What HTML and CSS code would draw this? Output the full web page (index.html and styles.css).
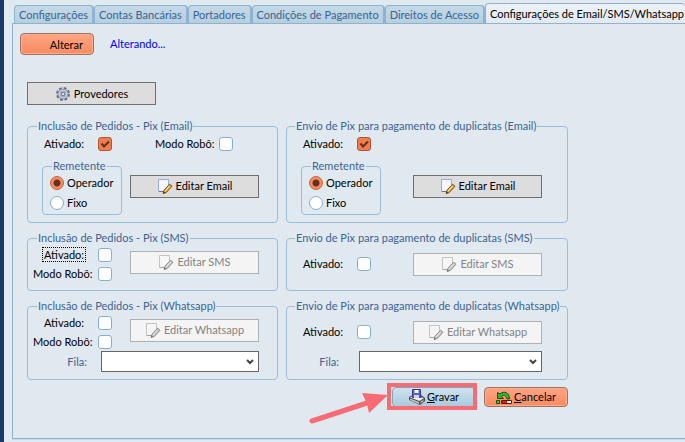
FILE: index.html
```html
<!DOCTYPE html>
<html lang="pt-BR">
<head>
    <meta charset="UTF-8">
    <meta name="viewport" content="width=device-width, initial-scale=1.0">
    <title>Configurações de Email/SMS/Whatsapp</title>
    <link rel="stylesheet" href="styles.css">
</head>
<body>
    <!-- Ícones reutilizados -->
    <svg class="sprite" aria-hidden="true">
        <symbol id="icone-editar" viewBox="0 0 16 16">
            <path class="folha" d="M1.5 1.5h10v9l-4 3h-6z"/>
            <path class="sombra" d="M2 13.5h6l4-4"/>
            <path class="lapis" d="M12.6 6.2l2.4 2-5.6 6.2-3.2 1.2.8-3.4z"/>
            <path class="brilho" d="M12.4 8.2l-4.4 5"/>
            <path class="ponta" d="M6.5 13.6l1.6 1.2-2.2.9z"/>
        </symbol>
    </svg>

    <nav class="abas">
        <a href="#" class="aba">Configurações</a>
        <a href="#" class="aba">Contas Bancárias</a>
        <a href="#" class="aba">Portadores</a>
        <a href="#" class="aba">Condições de Pagamento</a>
        <a href="#" class="aba">Direitos de Acesso</a>
        <a href="#" class="aba ativa">Configurações de Email/SMS/Whatsapp</a>
    </nav>

    <main class="painel">
        <div class="topo">
            <button type="button" class="btn btn-laranja btn-alterar">Alterar</button>
            <span class="status">Alterando...</span>
        </div>

        <form class="conteudo" action="#" method="post">
            <button type="button" class="btn-plano">
                <svg class="icone" viewBox="0 0 16 16" aria-hidden="true">
                    <circle cx="8" cy="8" r="5.8" fill="none" stroke="#66738d" stroke-width="2.4" stroke-dasharray="2.7 1.85"/>
                    <circle cx="8" cy="8" r="4" fill="#dfe5ef" stroke="#77849f" stroke-width="2.4"/>
                    <circle cx="8" cy="8" r="3.9" fill="none" stroke="#cdd6e4" stroke-width="1.4"/>
                    <circle cx="8" cy="8" r="1.9" fill="#dedede" stroke="#5d6b85" stroke-width="1"/>
                </svg>
                Provedores
            </button>

            <div class="grupos">
                <fieldset class="grupo">
                    <legend>Inclusão de Pedidos - Pix (Email)</legend>
                    <div class="linha linha-email">
                        <label class="campo" for="pix_email"><span class="texto">Ativado:</span></label>
                        <input type="checkbox" id="pix_email" checked>
                        <label class="robo" for="pix_email_robo">Modo Robô:</label>
                        <input type="checkbox" id="pix_email_robo">
                    </div>
                    <div class="linha">
                        <fieldset class="remetente">
                            <legend>Remetente</legend>
                            <label><input type="radio" name="remetente_pix" checked>Operador</label>
                            <label><input type="radio" name="remetente_pix">Fixo</label>
                        </fieldset>
                        <button type="button" class="btn-plano">
                            <svg class="icone"><use href="#icone-editar"/></svg>Editar Email
                        </button>
                    </div>
                </fieldset>

                <fieldset class="grupo grupo-envio">
                    <legend>Envio de Pix para pagamento de duplicatas (Email)</legend>
                    <div class="linha linha-email">
                        <label class="campo" for="dup_email"><span class="texto">Ativado:</span></label>
                        <input type="checkbox" id="dup_email" checked>
                    </div>
                    <div class="linha">
                        <fieldset class="remetente">
                            <legend>Remetente</legend>
                            <label><input type="radio" name="remetente_dup" checked>Operador</label>
                            <label><input type="radio" name="remetente_dup">Fixo</label>
                        </fieldset>
                        <button type="button" class="btn-plano">
                            <svg class="icone"><use href="#icone-editar"/></svg>Editar Email
                        </button>
                    </div>
                </fieldset>

                <fieldset class="grupo">
                    <legend>Inclusão de Pedidos - Pix (SMS)</legend>
                    <div class="linha">
                        <div class="opcoes">
                            <div class="linha">
                                <label class="campo" for="pix_sms"><span class="texto foco">Ativado:</span></label>
                                <input type="checkbox" id="pix_sms">
                            </div>
                            <div class="linha">
                                <label class="campo longo" for="pix_sms_robo">Modo Robô:</label>
                                <input type="checkbox" id="pix_sms_robo">
                            </div>
                        </div>
                        <button type="button" class="btn-plano" disabled>
                            <svg class="icone"><use href="#icone-editar"/></svg>Editar SMS
                        </button>
                    </div>
                </fieldset>

                <fieldset class="grupo grupo-envio">
                    <legend>Envio de Pix para pagamento de duplicatas (SMS)</legend>
                    <div class="linha">
                        <div class="opcoes">
                            <div class="linha">
                                <label class="campo" for="dup_sms"><span class="texto">Ativado:</span></label>
                                <input type="checkbox" id="dup_sms">
                            </div>
                        </div>
                        <button type="button" class="btn-plano" disabled>
                            <svg class="icone"><use href="#icone-editar"/></svg>Editar SMS
                        </button>
                    </div>
                </fieldset>

                <fieldset class="grupo">
                    <legend>Inclusão de Pedidos - Pix (Whatsapp)</legend>
                    <div class="linha">
                        <div class="opcoes">
                            <div class="linha">
                                <label class="campo" for="pix_whats"><span class="texto">Ativado:</span></label>
                                <input type="checkbox" id="pix_whats">
                            </div>
                            <div class="linha">
                                <label class="campo longo" for="pix_whats_robo">Modo Robô:</label>
                                <input type="checkbox" id="pix_whats_robo">
                            </div>
                        </div>
                        <button type="button" class="btn-plano" disabled>
                            <svg class="icone"><use href="#icone-editar"/></svg>Editar Whatsapp
                        </button>
                    </div>
                    <div class="linha fila">
                        <label for="pix_fila">Fila:</label>
                        <select id="pix_fila"><option value=""></option></select>
                    </div>
                </fieldset>

                <fieldset class="grupo grupo-envio">
                    <legend>Envio de Pix para pagamento de duplicatas (Whatsapp)</legend>
                    <div class="linha">
                        <div class="opcoes">
                            <div class="linha">
                                <label class="campo" for="dup_whats"><span class="texto">Ativado:</span></label>
                                <input type="checkbox" id="dup_whats">
                            </div>
                        </div>
                        <button type="button" class="btn-plano" disabled>
                            <svg class="icone"><use href="#icone-editar"/></svg>Editar Whatsapp
                        </button>
                    </div>
                    <div class="linha fila">
                        <label for="dup_fila">Fila:</label>
                        <select id="dup_fila"><option value=""></option></select>
                    </div>
                </fieldset>
            </div>

            <div class="acoes">
                <div class="destaque">
                    <button type="submit" class="btn btn-azul">
                        <svg class="icone" viewBox="0 0 16 16" aria-hidden="true">
                            <path d="M0 8l4-2h8l4 3v3l-5 4-11-5z" fill="#4a4a55"/>
                            <path d="M1 8.5L4.500 7 15 9l-4.500 3z" fill="#f1f1f5"/>
                            <path d="M1 9.500l9 3.500v2l-9-4z" fill="#c3c4cf"/>
                            <path d="M11 13l4-3v2l-4 3z" fill="#85869a"/>
                            <path d="M3.500.500h8v8h-8z" fill="#5a60c8" stroke="#34398a"/>
                            <path d="M5.500 1h4v3h-4z" fill="#fff"/>
                            <path d="M5 6h5v3H5z" fill="#c9d6fa"/>
                            <path d="M12 12h2v1h-2z" fill="#e9d24a"/>
                        </svg>
                        <span><u>G</u>ravar</span>
                    </button>
                    <svg class="seta" viewBox="0 0 82 34" aria-hidden="true">
                        <path d="M4 29L62 10" stroke="#f76c72" stroke-width="5" stroke-linecap="round"/>
                        <path d="M54 1L80 3 61 21 59 12z" fill="#f76c72"/>
                    </svg>
                </div>
                <button type="button" class="btn btn-laranja">
                    <svg class="icone" viewBox="0 0 16 16" aria-hidden="true">
                        <path d="M1.500 3.500v6h6L5.500 7.500c2-2 4-1.500 5.500 2.500h2.500c0-6-5-9-9.500-5z" fill="#35b52c" stroke="#14500f"/>
                        <path d="M.500 11.500h3v3h-3z" fill="#41c936" stroke="#14500f"/>
                        <path d="M5.500 11.500h10v3h-10z" fill="#fff" stroke="#6d1208"/>
                        <path d="M6 12h5v2H6z" fill="#d81c12"/>
                    </svg>
                    <span><u>C</u>ancelar</span>
                </button>
            </div>
        </form>
    </main>
</body>
</html>
```

FILE: styles.css
```css
* {
    box-sizing: border-box;
}
body {
    display: flex;
    flex-direction: column;
    min-height: 100vh;
    margin: 0;
    padding: 3px 0 3px 8px;
    border-left: 4px solid #1b3a69;
    background-color: #e1e9f0;
    color: #000000;
    font-family: Tahoma, Lato, "DejaVu Sans", sans-serif;
    font-size: 11px;
    line-height: 14px;
}
button,
input,
select {
    margin: 0;
    font: inherit;
    color: inherit;
}
.sprite {
    position: absolute;
    width: 0;
    height: 0;
}

/* Abas */
.abas {
    display: flex;
    align-items: flex-end;
    padding-left: 2px;
}
.aba {
    height: 18px;
    padding: 2px 4px 0;
    border: 1px solid #8db3cf;
    border-right-width: 2px;
    border-bottom: 0;
    border-radius: 4px 4px 0 0;
    background: linear-gradient(#c4d9e7, #b6cfdf);
    color: #3a6492;
    text-decoration: none;
    white-space: nowrap;
}
.aba.ativa {
    flex: 1;
    height: 21px;
    margin-bottom: -1px;
    padding: 3px 0 0 4px;
    border-right: 0;
    background: linear-gradient(#edf2f8, #e1e9f0);
    color: #000000;
}

/* Painel */
.painel {
    flex: 1;
    padding: 9px 7px;
    border: 1px solid #8db3cf;
    border-right: 0;
    box-shadow: 0 1px 0 #c9dae7;
}
.topo {
    display: flex;
    gap: 16px;
}
.status {
    padding-top: 4px;
    color: #0000ff;
}
.conteudo {
    max-width: 548px;
    padding: 27px 0 0 7px;
}
.btn {
    display: flex;
    align-items: center;
    justify-content: center;
    gap: 2px;
    width: 84px;
    height: 20px;
    padding: 0;
    border: 1px solid #9b7468;
    border-radius: 4px;
}
.btn-laranja {
    background: linear-gradient(#ffa583, #f88a60);
    box-shadow: inset 0 0 0 1px #ffab8c;
}
.btn-azul {
    border-color: #7fa6bd;
    background: linear-gradient(#cfe2ee, #a9cbdd);
}
.btn-alterar {
    justify-content: flex-end;
    width: 74px;
    height: 22px;
    padding: 1px 10px 0;
}
.btn-plano {
    display: flex;
    align-items: center;
    justify-content: center;
    gap: 3px;
    width: 129px;
    height: 23px;
    padding: 0;
    border: 1px solid #707070;
    background-color: #dddddd;
    white-space: nowrap;
}
.btn-plano:disabled {
    border-color: #adb2b5;
    background-color: #f4f4f4;
    color: #838383;
}
.icone {
    flex: none;
    width: 16px;
    height: 16px;
}

/* Desenho da folha com lapis */
.folha {
    fill: #f4f7ff;
    stroke: #9aa9d6;
}
.sombra {
    fill: none;
    stroke: #5f74b8;
}
.lapis {
    fill: #e5a93c;
    stroke: #7a5216;
}
.brilho {
    stroke: #ffe9a8;
}
.ponta {
    fill: #3a2a14;
}
.btn-plano:disabled .icone {
    filter: grayscale(1) opacity(0.65);
}

/* Grupos */
.grupos {
    display: grid;
    grid-template-columns: 251fr 282fr;
    gap: 8px;
    margin-top: 14px;
}
fieldset {
    min-width: 0;
    margin: 0;
    padding: 0;
    border: 1px solid #9dbdd7;
    border-radius: 4px;
}
legend {
    height: 14px;
    margin-left: 9px;
    padding: 0 1px;
    color: #3a6492;
    white-space: nowrap;
}
.grupo {
    padding-bottom: 7px;
}
.grupo-envio > legend {
    margin-left: 8px;
}
.linha {
    display: flex;
    align-items: center;
}
.linha-email {
    padding: 4px 0 8px;
}
.campo {
    width: 70px;
    padding-left: 15px;
}
.campo.longo {
    padding-left: 5px;
}
.texto {
    padding: 0 1px;
}
.foco {
    outline: 1px dotted #000000;
}
.robo {
    width: 64px;
    margin-left: 43px;
}
.opcoes {
    display: flex;
    flex-direction: column;
    justify-content: center;
    gap: 5px;
    height: 38px;
}
.opcoes + .btn-plano {
    margin: 0 0 4px 18px;
}
.grupo-envio .opcoes + .btn-plano {
    margin: 0 0 0 42px;
}
.remetente {
    width: 80px;
    margin-left: 14px;
    padding: 0 0 0 7px;
    height: 56px;
}
.remetente legend {
    margin-left: 2px;
}
.remetente label {
    display: flex;
    align-items: center;
    gap: 3px;
    height: 20px;
}
.remetente + .btn-plano {
    margin: 0 0 2px 8px;
}
.grupo-envio .remetente + .btn-plano {
    margin-left: 32px;
}
.fila label {
    width: 73px;
    padding-right: 14px;
    color: #3a6492;
    text-align: right;
}
.grupo-envio .fila label {
    width: 72px;
    padding-right: 20px;
}
.fila select {
    flex: 1;
    height: 21px;
    margin-right: 18px;
    border: 1px solid #666666;
    border-radius: 0;
    appearance: none;
    background: #ffffff url("data:image/svg+xml,%3Csvg xmlns='http://www.w3.org/2000/svg' width='8' height='6'%3E%3Cpath d='M1 1l3 3 3-3' fill='none' stroke='%23444' stroke-width='2'/%3E%3C/svg%3E") no-repeat right 4px center;
}
.grupo-envio .fila select {
    margin-right: 25px;
}

/* Marcadores */
input[type="checkbox"],
input[type="radio"] {
    flex: none;
    width: 14px;
    height: 14px;
    border: 1px solid #86afd0;
    border-radius: 3px;
    appearance: none;
    background-color: #ffffff;
}
input[type="radio"] {
    border-radius: 50%;
}
input[type="checkbox"]:checked {
    border-color: #a9583c;
    background: #f47c4c url("data:image/svg+xml,%3Csvg xmlns='http://www.w3.org/2000/svg' width='12' height='12'%3E%3Cpath d='M2.5 5.5l2.5 3 5-5' fill='none' stroke='%235e3020' stroke-width='2'/%3E%3C/svg%3E") center no-repeat;
}
input[type="radio"]:checked {
    border-color: #c4623f;
    background: radial-gradient(circle, #66311f 3px, #f98c61 4px);
}

/* Botoes do rodape */
.acoes {
    display: flex;
    justify-content: flex-end;
    gap: 8px;
    margin-top: 7px;
}
.destaque {
    position: relative;
}
.destaque::after {
    content: "";
    position: absolute;
    inset: -4px -1px -3px -5px;
    border: 4px solid #f76c72;
    pointer-events: none;
}
.seta {
    position: absolute;
    top: 5px;
    right: 86px;
    width: 82px;
    height: 34px;
    fill: none;
}
```
